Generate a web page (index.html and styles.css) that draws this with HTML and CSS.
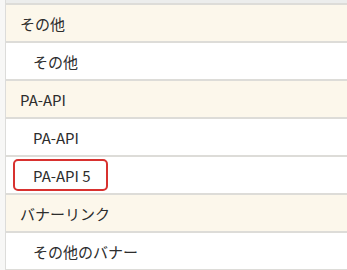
FILE: index.html
```html
<!DOCTYPE html>
<html lang="ja">
<head>
<meta charset="UTF-8" />
<title>カテゴリ</title>
<link rel="stylesheet" href="styles.css">
</head>
<body>
<div class="cat-wrap">
  <div class="cat-top"></div>
  <ul class="cat-list">
    <li class="cat-head">その他</li>
    <li class="cat-item"><a href="#">その他</a></li>
    <li class="cat-head">PA-API</li>
    <li class="cat-item"><a href="#">PA-API</a></li>
    <li class="cat-item"><a href="#" class="current">PA-API 5</a></li>
    <li class="cat-head">バナーリンク</li>
    <li class="cat-item"><a href="#">その他のバナー</a></li>
  </ul>
</div>
</body>
</html>
```

FILE: styles.css
```css
*,*:before,*:after{box-sizing:border-box;}
body{margin:0;background:#f7f7f6;font-family:"Noto Sans CJK JP","Noto Sans",sans-serif;color:#2d2d2d;}
.cat-wrap{margin-left:5px;border-left:1px solid #dcdcda;background:#fff;}
.cat-top{height:5px;background:#ecedec;border-bottom:2px solid #dddcd8;}
.cat-list{list-style:none;margin:0;padding:0;}
.cat-list li{height:38px;border-bottom:2px solid #dddcd8;display:flex;align-items:center;font-size:15px;}
.cat-head{background:#fcf7eb;padding-left:14px;}
.cat-item{background:#fff;padding-left:7px;}
.cat-item a{display:flex;align-items:center;height:32px;padding:0 15px 0 18px;border:2px solid transparent;border-radius:5px;color:#2d2d2d;text-decoration:none;}
.cat-item a.current{border-color:#d8312f;}
```
